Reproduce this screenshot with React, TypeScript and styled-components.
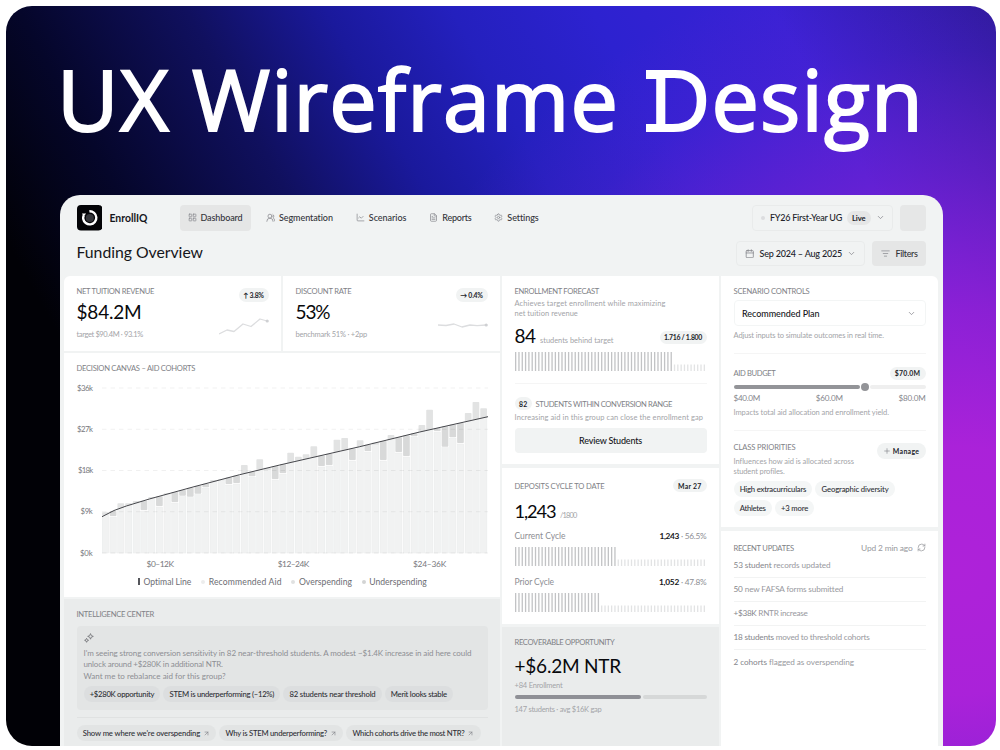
import { useLayoutEffect, useRef, useState, type ReactNode } from "react";
import styled, { createGlobalStyle } from "styled-components";
import {
  ArrowUpRight,
  Calendar,
  ChartLine,
  ChevronDown,
  FileText,
  LayoutGrid,
  ListFilter,
  Plus,
  RefreshCw,
  Settings,
  UsersRound,
} from "lucide-react";

const GlobalStyle = createGlobalStyle`
  * {
    box-sizing: border-box;
  }

  body {
    margin: 0;
    background: #fff;
    font-family: Lato, "Open Sans", sans-serif;
    color: #15161a;
    overflow: hidden;
  }

  svg {
    display: block;
    flex: none;
  }
`;

/* ---------- text fitting ---------- */

const FitText = styled.span`
  display: inline-block;
  white-space: nowrap;
`;

type FitProps = { w: number; children: ReactNode };

// tracks a line of text so that it fills the given width
function Fit({ w, children }: FitProps) {
  const ref = useRef<HTMLSpanElement>(null);
  const [tracking, setTracking] = useState(0);

  useLayoutEffect(() => {
    const el = ref.current;
    if (!el) return;
    el.style.letterSpacing = "0px";
    const natural = el.getBoundingClientRect().width;
    const count = (el.textContent || "").length || 1;
    const next = (w - natural) / count;
    el.style.letterSpacing = `${next}px`;
    setTracking(next);
  }, [w]);

  return (
    <FitText ref={ref} style={{ letterSpacing: tracking }}>
      {children}
    </FitText>
  );
}

/* ---------- frame ---------- */

const Page = styled.main`
  width: 1000px;
  height: 750px;
  padding: 6px 4px 4.5px 6px;
`;

const Frame = styled.div`
  height: 100%;
  overflow: hidden;
  border-radius: 26px;
  display: flex;
  flex-direction: column;
  background:
    radial-gradient(
      circle 620px at 950px 565px,
      #ae22d9 0%,
      rgba(174, 34, 217, 0.97) 20%,
      rgba(160, 32, 215, 0.8) 42%,
      rgba(140, 32, 212, 0.5) 64%,
      rgba(110, 32, 215, 0.2) 84%,
      rgba(90, 32, 215, 0) 100%
    ),
    linear-gradient(
      61deg,
      #010106 20%,
      #05062a 30%,
      #10105e 42%,
      #1a199c 52%,
      #2420be 61%,
      #2d22d0 71%,
      #3822d4 84%,
      #2a1a98 100%
    );
`;

const Headline = styled.h1`
  margin: 0;
  height: 189px;
  padding: 33px 0 0 51px;
  display: flex;
  font: 500 84.5px/120px "Open Sans", sans-serif;
  color: #fff;
  -webkit-text-stroke: 2px #fff;
`;

const Word = styled.span<{ $gap: number }>`
  margin-right: ${({ $gap }) => $gap}px;
`;

const SlabD = styled.span`
  position: relative;

  &::before,
  &::after {
    content: "";
    position: absolute;
    left: -3px;
    width: 16px;
    height: 8.5px;
    background: #fff;
  }

  &::before {
    top: 29px;
  }

  &::after {
    top: 82.5px;
  }
`;

const AppWindow = styled.section`
  width: 883px;
  flex: 1;
  margin-left: 54px;
  padding: 10px 5px 0 4px;
  border-radius: 20px 20px 0 0;
  background: #f1f3f3;
  overflow: hidden;
`;

/* ---------- top bars ---------- */

const Bar = styled.header`
  display: flex;
  align-items: center;
  height: 25.5px;
  padding: 0 12.5px 0 12.5px;
  margin-bottom: 10px;
`;

const Brand = styled.div`
  display: flex;
  align-items: center;
  gap: 7.5px;
  width: 103px;
  font-size: 10.4px;
  font-weight: 700;
`;

const Nav = styled.nav`
  display: flex;
  gap: 7px;
  margin-right: auto;
`;

const NavItem = styled.a<{ $active?: boolean }>`
  display: flex;
  align-items: center;
  gap: 4px;
  height: 25.5px;
  padding: 0 8px;
  border-radius: 4px;
  font-size: 9px;
  font-weight: 500;
  color: #33343a;
  background: ${({ $active }) => ($active ? "#e5e6e6" : "transparent")};

  svg {
    color: #8b8c92;
  }
`;

const PageTitle = styled.h2`
  margin: -3px auto 0 0;
  font-size: 15.8px;
  font-weight: 400;
`;

const Picker = styled.button<{ $w: number }>`
  display: flex;
  align-items: center;
  width: ${({ $w }) => $w}px;
  height: 25.5px;
  padding: 0 8px;
  margin-right: 6.5px;
  border: 1px solid #e9ebeb;
  border-radius: 4px;
  background: transparent;
  font: 500 9px Lato, sans-serif;
  color: #22232a;

  svg {
    color: #85868c;
  }
`;

const StatusDot = styled.i`
  flex: none;
  width: 4px;
  height: 4px;
  margin-right: 5px;
  border-radius: 50%;
  background: #dcdddf;
`;

const LiveTag = styled.span`
  display: flex;
  align-items: center;
  height: 14px;
  margin: 0 5.5px 0 5px;
  padding: 0 5px;
  border-radius: 7px;
  background: #e5e6e6;
  font-size: 7.6px;
  font-weight: 700;
`;

const DateRange = styled.span`
  margin: 0 5px 0 5.5px;
`;

const Avatar = styled.div`
  width: 26px;
  height: 25.5px;
  border-radius: 4px;
  background: #e6e7e7;
`;

const FilterButton = styled.button`
  display: flex;
  align-items: center;
  gap: 6px;
  width: 54px;
  height: 25.5px;
  padding: 0 9px;
  border: none;
  border-radius: 4px;
  background: #e5e6e6;
  font: 500 9px Lato, sans-serif;
  color: #33343a;

  svg {
    color: #8b8c92;
  }
`;

/* ---------- board ---------- */

const Board = styled.div`
  display: grid;
  grid-template-columns: 436px 217px 217px;
  column-gap: 2px;
  height: 471px;
  border-radius: 6px 6px 0 0;
  overflow: hidden;
`;

const Column = styled.div<{ $gap: number }>`
  display: flex;
  flex-direction: column;
  gap: ${({ $gap }) => $gap}px;
`;

const KpiRow = styled.div`
  display: grid;
  grid-template-columns: 217px 217px;
  gap: 2px;
`;

const Card = styled.section<{ $h?: number; $muted?: boolean }>`
  height: ${({ $h }) => ($h ? `${$h}px` : "auto")};
  flex: ${({ $h }) => ($h ? "none" : "1")};
  padding: 9px 12.5px 0;
  background: ${({ $muted }) => ($muted ? "#eaecec" : "#fff")};
`;

const Label = styled.h3`
  margin: 0;
  font-size: 7.6px;
  line-height: 12px;
  font-weight: 400;
  color: #808186;
`;

const RaisedLabel = styled(Label)`
  align-self: flex-start;
  margin-top: -2px;
`;

const Value = styled.div<{ $mt?: number; $size?: number }>`
  margin-top: ${({ $mt = 3 }) => $mt}px;
  font-size: ${({ $size = 19 }) => $size}px;
  line-height: 24px;
  font-weight: 400;
  color: #08090c;
  white-space: nowrap;
`;

const Note = styled.p<{ $mt?: number }>`
  margin: ${({ $mt = 0 }) => $mt}px 0 0;
  font-size: 7.5px;
  line-height: 10px;
  font-weight: 400;
  color: #a3a4a8;
  white-space: nowrap;
`;

const Unit = styled.span`
  margin-left: 4.5px;
  font-size: 7.4px;
  color: #a3a4a8;
`;

const Badge = styled.span<{ $w: number; $h?: number }>`
  display: inline-flex;
  align-items: center;
  justify-content: center;
  width: ${({ $w }) => $w}px;
  height: ${({ $h = 13.5 }) => $h}px;
  border-radius: 8px;
  background: #f1f3f3;
  font-size: 6.9px;
  font-weight: 700;
  color: #22232a;
`;

const Spread = styled.div<{ $mt?: number; $h?: number }>`
  display: flex;
  align-items: center;
  justify-content: space-between;
  margin-top: ${({ $mt = 0 }) => $mt}px;
  height: ${({ $h }) => ($h ? `${$h}px` : "auto")};
`;

const Tagged = styled.div`
  display: flex;
  align-items: center;
  gap: 3.5px;
  margin-top: 12.5px;
`;

const KpiBody = styled.div`
  display: flex;
  justify-content: space-between;
`;

const KpiSide = styled.div`
  display: flex;
  flex-direction: column;
  align-items: flex-end;
  padding-top: 3px;
  gap: 14px;
`;

const Divider = styled.hr<{ $mt: number }>`
  height: 1px;
  margin: ${({ $mt }) => $mt}px 0 0;
  border: none;
  background: rgba(20, 30, 30, 0.045);
`;

/* ---------- decision canvas ---------- */

const ChartBody = styled.div`
  display: flex;
  margin-top: 9px;
`;

const AxisY = styled.div`
  display: flex;
  flex-direction: column;
  align-items: flex-end;
  justify-content: space-between;
  width: 16.5px;
  height: 175px;
  margin-right: 9px;
  font-size: 7.8px;
  line-height: 10px;
  color: #77787d;
`;

const Plot = styled.svg`
  width: 386px;
  height: 175px;
`;

const AxisX = styled.div`
  display: flex;
  justify-content: space-between;
  padding: 0 41.5px 0 70px;
  font-size: 8.4px;
  line-height: 12px;
  color: #77787d;
`;

const Legend = styled.div`
  display: flex;
  gap: 9.8px;
  margin-top: 6px;
  padding-left: 61.5px;
  font-size: 8.6px;
  line-height: 12px;
  color: #6c6d73;
`;

const LegendItem = styled.span`
  display: flex;
  align-items: center;
`;

const LegendMark = styled.i<{ $line?: boolean; $color: string }>`
  width: ${({ $line }) => ($line ? 2 : 4)}px;
  height: ${({ $line }) => ($line ? 7.5 : 4)}px;
  margin-right: 3.5px;
  border-radius: ${({ $line }) => ($line ? 0 : "50%")};
  background: ${({ $color }) => $color};
`;

/* ---------- intelligence center ---------- */

const Insight = styled.div`
  height: 84px;
  margin-top: 6px;
  padding: 7px 7px 0;
  border-radius: 4px;
  background: #e3e5e5;
`;

const InsightText = styled.p`
  margin: 5.6px 0 0;
  font-size: 8px;
  line-height: 11.2px;
  color: #8d8e93;
`;

const Chips = styled.div<{ $mt: number; $gap?: number }>`
  display: flex;
  flex-wrap: wrap;
  gap: ${({ $gap = 2.5 }) => $gap}px 3px;
  margin-top: ${({ $mt }) => $mt}px;
`;

const Chip = styled.span<{ $tone?: string }>`
  display: flex;
  align-items: center;
  gap: 3px;
  height: 16px;
  padding: 0 6.2px;
  border-radius: 8px;
  background: ${({ $tone = "#dcdedf" }) => $tone};
  font-size: 7.7px;
  font-weight: 500;
  color: #2e2f35;

  svg {
    color: #7b7c82;
  }
`;

/* ---------- forecast ---------- */

const Meter = styled.svg<{ $mt: number }>`
  width: 192px;
  height: 19.5px;
  margin-top: ${({ $mt }) => $mt}px;
`;

const WideButton = styled.button`
  width: 100%;
  height: 25px;
  margin-top: 5px;
  border: none;
  border-radius: 4px;
  background: #f1f3f3;
  font: 500 9px Lato, sans-serif;
  color: #15161a;
`;

const CycleName = styled.span`
  font-size: 8.5px;
  color: #8d8e93;
`;

const CycleValue = styled.span`
  display: flex;
  gap: 2px;
  font-size: 8.3px;
  color: #8d8e93;

  b {
    color: #15161a;
  }
`;

const Progress = styled.div`
  display: grid;
  grid-template-columns: 126px 1fr;
  gap: 2px;
  margin-top: 4.5px;

  i {
    height: 4px;
    border-radius: 2px;
    background: #d6d8d8;
  }

  i:first-child {
    background: #8f9096;
  }
`;

/* ---------- scenario controls ---------- */

const PlanSelect = styled.div`
  display: flex;
  align-items: center;
  justify-content: space-between;
  height: 25.5px;
  margin-top: 3.3px;
  padding: 0 8.5px 0 7.5px;
  border: 1px solid #f3f5f5;
  border-radius: 4px;
  font-size: 9px;
  font-weight: 500;

  svg {
    color: #85868c;
  }
`;

const Slider = styled.div`
  display: grid;
  grid-template-columns: 126px 8px 1fr;
  align-items: center;
  gap: 1px;
  height: 8px;
  margin-top: 2.2px;

  i {
    height: 4px;
    border-radius: 2px;
    background: #efefef;
  }

  i:first-child {
    background: #939498;
  }

  i:nth-child(2) {
    height: 8px;
    border-radius: 50%;
    background: #939498;
  }
`;

const Scale = styled.div`
  display: flex;
  justify-content: space-between;
  margin-top: 1.8px;
  font-size: 8.1px;
  line-height: 12px;
  color: #85868c;
`;

const Update = styled.div`
  display: flex;
  align-items: center;
  height: 24.1px;
  border-bottom: 1px solid #f2f3f3;
  font-size: 8.2px;
  color: #98999e;

  &:last-child {
    border-bottom: none;
  }

  b {
    font-weight: 400;
    color: #85868b;
  }
`;

const Refreshed = styled.span`
  display: flex;
  align-items: center;
  gap: 4px;
  font-size: 8.4px;
  color: #98999e;
`;

/* ---------- drawings ---------- */

function Logo() {
  return (
    <svg width="25.5" height="25.5" viewBox="0 0 25.5 25.5">
      <rect width="25.5" height="25.5" rx="4" fill="#040407" />
      <circle cx="12.8" cy="13" r="4" fill="#34353a" />
      <path
        d="M12.4 6.2a6.6 6.6 0 1 1-6.2 7.6c-.2-1.5.1-2.5.6-3.6"
        fill="none"
        stroke="#fff"
        strokeWidth="2.4"
      />
      <path d="M5 8.6l4.2-.2-2.6 3.1z" fill="#fff" />
    </svg>
  );
}

function Spark({ points, end }: { points: string; end: [number, number] }) {
  return (
    <svg width="50" height="20" viewBox="0 0 50 20">
      <polyline points={points} fill="none" stroke="#dcdddf" strokeWidth="1.3" strokeLinejoin="round" />
      <circle cx={end[0]} cy={end[1]} r="1.6" fill="#cfd0d3" />
    </svg>
  );
}

function Sparkle() {
  return (
    <svg width="10" height="10" viewBox="0 0 10 10" fill="none" stroke="#77787d" strokeWidth="0.9" strokeLinejoin="round">
      <path d="M6.5 .6l.8 2 2 .8-2 .8-.8 2-.8-2-2-.8 2-.8z" />
      <path d="M2.6 5.3l.6 1.4 1.4.6-1.4.6-.6 1.4-.6-1.4-1.4-.6 1.4-.6z" />
    </svg>
  );
}

// distance from the top grid line to the end of each deviation
const COHORTS: [kind: "over" | "under", y: number][] = [
  ["over", 124.3], ["under", 128], ["over", 115.3], ["over", 115.3], ["over", 113],
  ["under", 122], ["over", 109], ["under", 118], ["over", 105.3], ["under", 114],
  ["under", 107.7], ["under", 108.7], ["under", 105.7], ["under", 99.3], ["over", 92],
  ["over", 92.3], ["under", 96], ["under", 95], ["over", 77], ["under", 88.3],
  ["over", 71.3], ["over", 82], ["under", 91], ["under", 85], ["over", 64.7],
  ["over", 68.7], ["over", 66.3], ["over", 58.3], ["under", 78], ["under", 77],
  ["over", 51.7], ["over", 50], ["under", 72], ["over", 52.3], ["under", 63],
  ["over", 56.7], ["under", 72], ["over", 47], ["under", 64], ["under", 68],
  ["under", 48.3], ["over", 37], ["over", 21.7], ["under", 43], ["under", 58.7],
  ["under", 49.3], ["under", 55], ["over", 25], ["over", 14], ["over", 20.3],
];

const OPTIMAL: [number, number][] = [
  [0, 128.7], [12, 122.5], [24.3, 118], [47.7, 110.9], [91, 99],
  [137.7, 86.7], [177.7, 77], [257.7, 58.7], [317.7, 44], [386, 28.7],
];

function optimalAt(x: number) {
  const i = Math.max(1, OPTIMAL.findIndex(([px]) => px >= x));
  const [x0, y0] = OPTIMAL[i - 1];
  const [x1, y1] = OPTIMAL[i];
  return y0 + ((x - x0) / (x1 - x0)) * (y1 - y0);
}

function CohortPlot() {
  return (
    <Plot viewBox="0 -5 386 175">
      {COHORTS.map(([kind, y], i) => {
        const x = i * 7.72;
        const line = optimalAt(x + 3.3);
        const top = kind === "over" ? line : y + 1;
        return (
          <g key={i}>
            <rect x={x + 0.2} y={top} width="6.4" height={165 - top} fill="#f1f2f2" stroke="#e9ebeb" strokeWidth="0.5" />
            <rect
              x={x}
              y={Math.min(line, y)}
              width="6.7"
              height={Math.abs(line - y)}
              rx="0.8"
              fill={kind === "over" ? "#e2e3e3" : "#d8d9d9"}
            />
          </g>
        );
      })}
      {[0, 41.25, 82.5, 123.75, 165].map((y) => (
        <line key={y} x1="0" x2="386" y1={y} y2={y} stroke="#000" strokeOpacity="0.06" strokeDasharray="4.5 4" />
      ))}
      <polyline
        points={OPTIMAL.map((p) => p.join(",")).join(" ")}
        fill="none"
        stroke="#45464b"
        strokeWidth="1"
      />
    </Plot>
  );
}

function StripeMeter({ filled, mt }: { filled: number; mt: number }) {
  return (
    <Meter $mt={mt} viewBox="0 0 192 19.5">
      {Array.from({ length: 58 }, (_, i) => (
        <rect
          key={i}
          x={i * 3.31}
          y={i < filled ? 0 : 12.5}
          width="1.3"
          height={i < filled ? 19.5 : 7}
          fill={i < filled ? "#c2c3c5" : "#e2e3e4"}
        />
      ))}
    </Meter>
  );
}

const UPDATES = [
  { lead: "53 student", rest: " records updated", w: 97 },
  { lead: "50", rest: " new FAFSA forms submitted", w: 109.5 },
  { lead: "+$38K", rest: " RNTR increase", w: 74 },
  { lead: "18 students", rest: " moved to threshold cohorts", w: 136 },
  { lead: "2 cohorts", rest: " flagged as overspending", w: 120.5 },
];

export default function App() {
  return (
    <Page>
      <GlobalStyle />
      <Frame>
        <Headline>
          <Word $gap={22}><Fit w={113}>UX</Fit></Word>
          <Word $gap={30}><Fit w={427}>Wireframe</Fit></Word>
          <Word $gap={0}><Fit w={275}><SlabD>D</SlabD>esign</Fit></Word>
        </Headline>

        <AppWindow>
          <Bar>
            <Brand>
              <Logo />
              <Fit w={38}>EnrollIQ</Fit>
            </Brand>
            <Nav>
              <NavItem $active><LayoutGrid size={9} /><Fit w={42}>Dashboard</Fit></NavItem>
              <NavItem><UsersRound size={9.5} /><Fit w={54}>Segmentation</Fit></NavItem>
              <NavItem><ChartLine size={9} /><Fit w={37.5}>Scenarios</Fit></NavItem>
              <NavItem><FileText size={9} /><Fit w={29}>Reports</Fit></NavItem>
              <NavItem><Settings size={9} /><Fit w={31}>Settings</Fit></NavItem>
            </Nav>
            <Picker $w={141}>
              <StatusDot />
              <Fit w={72}>FY26 First-Year UG</Fit>
              <LiveTag><Fit w={13.5}>Live</Fit></LiveTag>
              <ChevronDown size={9} />
            </Picker>
            <Avatar />
          </Bar>

          <Bar>
            <PageTitle><Fit w={126.5}>Funding Overview</Fit></PageTitle>
            <Picker $w={129.5}>
              <Calendar size={9.5} />
              <DateRange><Fit w={82.5}>Sep 2024 – Aug 2025</Fit></DateRange>
              <ChevronDown size={9} />
            </Picker>
            <FilterButton><ListFilter size={9} /><Fit w={22}>Filters</Fit></FilterButton>
          </Bar>

          <Board>
            <Column $gap={2}>
              <KpiRow>
                <Card $h={74.5}>
                  <KpiBody>
                    <div>
                      <Label><Fit w={77.5}>NET TUITION REVENUE</Fit></Label>
                      <Value><Fit w={65}>$84.2M</Fit></Value>
                      <Note $mt={5.5}><Fit w={66.5}>target $90.4M · 93.1%</Fit></Note>
                    </div>
                    <KpiSide>
                      <Badge $w={30}><Fit w={20.5}>↑ 3.8%</Fit></Badge>
                      <Spark points="0,18 8,14 15,15.5 24,8 32,10.5 41,3 48,5" end={[48.2, 5]} />
                    </KpiSide>
                  </KpiBody>
                </Card>
                <Card $h={74.5}>
                  <KpiBody>
                    <div>
                      <Label><Fit w={56}>DISCOUNT RATE</Fit></Label>
                      <Value><Fit w={34}>53%</Fit></Value>
                      <Note $mt={5.5}><Fit w={71.5}>benchmark 51% · +2pp</Fit></Note>
                    </div>
                    <KpiSide>
                      <Badge $w={32}><Fit w={22.5}>→ 0.4%</Fit></Badge>
                      <Spark points="0,9 8,9.5 16,8 24,11 32,9 39,9.7 48,9" end={[48.2, 9]} />
                    </KpiSide>
                  </KpiBody>
                </Card>
              </KpiRow>

              <Card $h={244}>
                <Label><Fit w={118.5}>DECISION CANVAS – AID COHORTS</Fit></Label>
                <ChartBody>
                  <AxisY>
                    <Fit w={15.5}>$36k</Fit>
                    <Fit w={15.5}>$27k</Fit>
                    <Fit w={14.5}>$18k</Fit>
                    <Fit w={12}>$9k</Fit>
                    <Fit w={12.5}>$0k</Fit>
                  </AxisY>
                  <CohortPlot />
                </ChartBody>
                <AxisX>
                  <Fit w={27}>$0–12K</Fit>
                  <Fit w={31}>$12–24K</Fit>
                  <Fit w={33}>$24–36K</Fit>
                </AxisX>
                <Legend>
                  <LegendItem><LegendMark $line $color="#55565b" /><Fit w={48}>Optimal Line</Fit></LegendItem>
                  <LegendItem><LegendMark $color="#eceded" /><Fit w={73}>Recommended Aid</Fit></LegendItem>
                  <LegendItem><LegendMark $color="#e0e1e1" /><Fit w={53}>Overspending</Fit></LegendItem>
                  <LegendItem><LegendMark $color="#d3d4d4" /><Fit w={57.5}>Underspending</Fit></LegendItem>
                </Legend>
              </Card>

              <Card $muted>
                <Label><Fit w={77.5}>INTELLIGENCE CENTER</Fit></Label>
                <Insight>
                  <Sparkle />
                  <InsightText>
                    <Fit w={388}>
                      I'm seeing strong conversion sensitivity in 82 near-threshold students. A modest ~$1.4K increase in aid here could
                    </Fit>
                    <br />
                    <Fit w={139.5}>unlock around +$280K in additional NTR.</Fit>
                    <br />
                    <Fit w={142}>Want me to rebalance aid for this group?</Fit>
                  </InsightText>
                  <Chips $mt={4.7}>
                    <Chip><Fit w={64.5}>+$280K opportunity</Fit></Chip>
                    <Chip><Fit w={104.5}>STEM is underperforming (–12%)</Fit></Chip>
                    <Chip><Fit w={86}>82 students near threshold</Fit></Chip>
                    <Chip><Fit w={56}>Merit looks stable</Fit></Chip>
                  </Chips>
                </Insight>
                <Divider $mt={7} />
                <Chips $mt={7.5}>
                  <Chip $tone="#e2e4e4"><Fit w={117.5}>Show me where we're overspending</Fit><ArrowUpRight size={7} /></Chip>
                  <Chip $tone="#e2e4e4"><Fit w={101.5}>Why is STEM underperforming?</Fit><ArrowUpRight size={7} /></Chip>
                  <Chip $tone="#e2e4e4"><Fit w={112}>Which cohorts drive the most NTR?</Fit><ArrowUpRight size={7} /></Chip>
                </Chips>
              </Card>
            </Column>

            <Column $gap={3.5}>
              <Card $h={188}>
                <Label><Fit w={84.5}>ENROLLMENT FORECAST</Fit></Label>
                <Note $mt={1.8}><Fit w={151}>Achieves target enrollment while maximizing</Fit></Note>
                <Note><Fit w={63.5}>net tuition revenue</Fit></Note>
                <Spread $mt={6.5} $h={24}>
                  <Value $mt={3.2}><Fit w={21}>84</Fit><Unit><Fit w={73.5}>students behind target</Fit></Unit></Value>
                  <Badge $w={47}><Fit w={38}>1.716 / 1.800</Fit></Badge>
                </Spread>
                <StripeMeter filled={48} mt={2.7} />
                <Divider $mt={12} />
                <Tagged>
                  <Badge $w={17.5}><Fit w={8.5}>82</Fit></Badge>
                  <Label><Fit w={136.5}>STUDENTS WITHIN CONVERSION RANGE</Fit></Label>
                </Tagged>
                <Note $mt={3}><Fit w={188.5}>Increasing aid in this group can close the enrollment gap</Fit></Note>
                <WideButton><Fit w={63}>Review Students</Fit></WideButton>
              </Card>

              <Card $h={156}>
                <Spread $mt={2.3} $h={13.5}>
                  <Label><Fit w={90}>DEPOSITS CYCLE TO DATE</Fit></Label>
                  <Badge $w={33.5}><Fit w={23.5}>Mar 27</Fit></Badge>
                </Spread>
                <Value $mt={7} $size={18.2}><Fit w={41}>1,243</Fit><Unit><Fit w={16.5}>/1800</Fit></Unit></Value>
                <Spread $mt={1.7} $h={12}>
                  <CycleName><Fit w={51}>Current Cycle</Fit></CycleName>
                  <CycleValue><b><Fit w={19.5}>1,243</Fit></b><Fit w={25.5}>· 56.5%</Fit></CycleValue>
                </Spread>
                <StripeMeter filled={31} mt={5} />
                <Spread $mt={9.5} $h={12}>
                  <CycleName><Fit w={39.5}>Prior Cycle</Fit></CycleName>
                  <CycleValue><b><Fit w={20}>1,052</Fit></b><Fit w={25.5}>· 47.8%</Fit></CycleValue>
                </Spread>
                <StripeMeter filled={26} mt={5} />
              </Card>

              <Card $muted>
                <Label><Fit w={100}>RECOVERABLE OPPORTUNITY</Fit></Label>
                <Value $mt={6}><Fit w={106.5}>+$6.2M NTR</Fit></Value>
                <Note $mt={2.8}><Fit w={48}>+84 Enrollment</Fit></Note>
                <Progress><i /><i /></Progress>
                <Note $mt={5.5}><Fit w={87}>147 students · avg $16K gap</Fit></Note>
              </Card>
            </Column>

            <Column $gap={4}>
              <Card $h={251}>
                <Label><Fit w={76}>SCENARIO CONTROLS</Fit></Label>
                <PlanSelect><Fit w={77.5}>Recommended Plan</Fit><ChevronDown size={9} /></PlanSelect>
                <Note $mt={5.5}><Fit w={150.5}>Adjust inputs to simulate outcomes in real time.</Fit></Note>
                <Divider $mt={11.7} />
                <Spread $mt={12.5} $h={14}>
                  <Label><Fit w={42}>AID BUDGET</Fit></Label>
                  <Badge $w={36}><Fit w={25.5}>$70.0M</Fit></Badge>
                </Spread>
                <Slider><i /><i /><i /></Slider>
                <Scale>
                  <Fit w={26.5}>$40.0M</Fit>
                  <Fit w={27}>$60.0M</Fit>
                  <Fit w={27}>$80.0M</Fit>
                </Scale>
                <Note $mt={3.5}><Fit w={155.5}>Impacts total aid allocation and enrollment yield.</Fit></Note>
                <Divider $mt={12} />
                <Spread $mt={12.5} $h={16}>
                  <RaisedLabel><Fit w={62}>CLASS PRIORITIES</Fit></RaisedLabel>
                  <Badge $w={48.5} $h={16}><Plus size={8} color="#85868c" />&nbsp;<Fit w={26.5}>Manage</Fit></Badge>
                </Spread>
                <Note $mt={-2.8}><Fit w={120.5}>Influences how aid is allocated across</Fit></Note>
                <Note><Fit w={51}>student profiles.</Fit></Note>
                <Chips $mt={4.7}>
                  <Chip $tone="#f4f6f6"><Fit w={66.5}>High extracurriculars</Fit></Chip>
                  <Chip $tone="#f4f6f6"><Fit w={67}>Geographic diversity</Fit></Chip>
                  <Chip $tone="#f4f6f6"><Fit w={26}>Athletes</Fit></Chip>
                  <Chip $tone="#f4f6f6"><Fit w={27}>+3 more</Fit></Chip>
                </Chips>
              </Card>

              <Card>
                <Spread $mt={1.5} $h={12}>
                  <Label><Fit w={60.5}>RECENT UPDATES</Fit></Label>
                  <Refreshed><Fit w={51.5}>Upd 2 min ago</Fit><RefreshCw size={9} /></Refreshed>
                </Spread>
                <div>
                  {UPDATES.map(({ lead, rest, w }) => (
                    <Update key={lead}>
                      <Fit w={w}><b>{lead}</b>{rest}</Fit>
                    </Update>
                  ))}
                </div>
              </Card>
            </Column>
          </Board>
        </AppWindow>
      </Frame>
    </Page>
  );
}
